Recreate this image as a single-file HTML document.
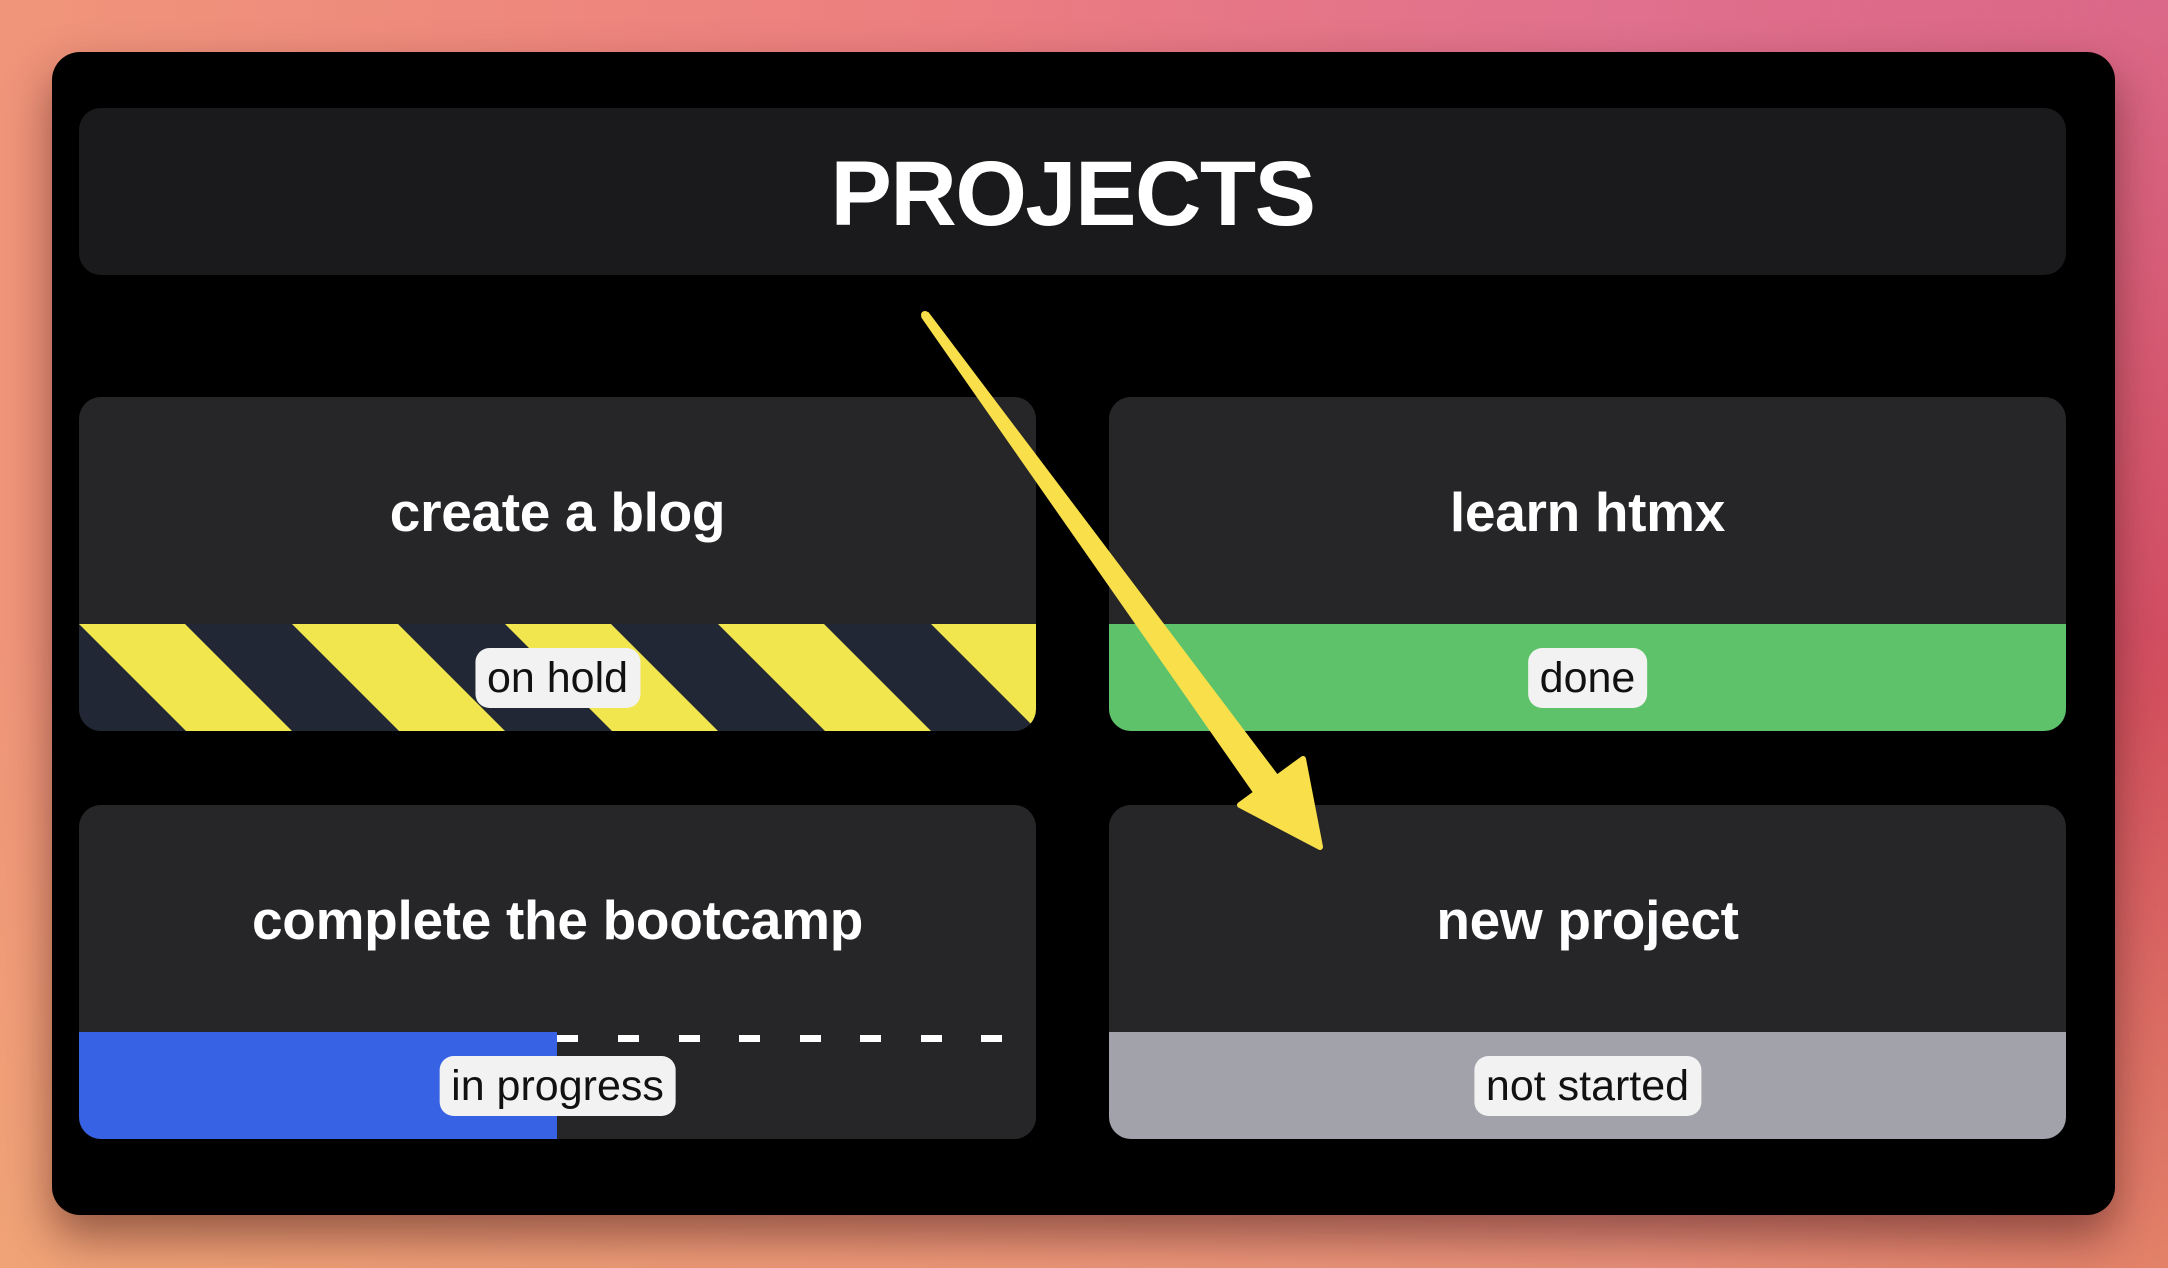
<!DOCTYPE html>
<html><head><meta charset="utf-8"><style>
*{margin:0;padding:0;box-sizing:border-box}
html,body{width:2168px;height:1268px;overflow:hidden}
body{position:relative;font-family:"Liberation Sans",sans-serif;
background:linear-gradient(90deg,#f0957a 0%,#ec7d80 45%,#e06a82 75%,#d24a5c 100%);}
.bg2{position:absolute;inset:0;background:linear-gradient(180deg,rgba(240,170,120,0) 0%,rgba(240,170,120,0) 50%,rgba(240,175,115,0.55) 100%);}
.bg3{position:absolute;inset:0;background:radial-gradient(ellipse at 100% 0%,rgba(225,125,165,0.6),rgba(225,125,165,0) 40%);}
.win{position:absolute;left:52px;top:52px;width:2063px;height:1163px;background:#000;border-radius:28px;box-shadow:0 22px 44px rgba(60,20,20,0.5)}
.hdr{position:absolute;left:79px;top:108px;width:1987px;height:167px;background:#1a1a1c;border-radius:22px;color:#fff;font-weight:bold;font-size:92px;letter-spacing:-1.5px;text-align:center;line-height:172px}
.card{position:absolute;width:957px;height:334px;background:#262628;border-radius:22px;overflow:hidden}
.title{position:absolute;left:0;right:0;top:0;height:227px;line-height:230px;text-align:center;color:#fff;font-weight:bold;font-size:55px;letter-spacing:-0.3px}
.bar{position:absolute;left:0;right:0;top:227px;height:107px}
.badge{position:absolute;left:50%;top:50%;transform:translate(-50%,-50%);background:#f2f2f2;color:#111;font-size:43px;border-radius:14px;padding:0 12px;height:60px;line-height:60px;white-space:nowrap}
</style></head><body>
<div class="bg2"></div><div class="bg3"></div>
<div class="win"></div>
<div class="hdr">PROJECTS</div>

<div class="card" style="left:79px;top:397px">
  <div class="title">create a blog</div>
  <div class="bar" style="background:#212734">
    <svg width="957" height="107" style="position:absolute;left:0;top:0">
      <g fill="#f2e64e">
        <polygon points="-213,0 -107,0 0,107 -106,107"/>
        <polygon points="0,0 106,0 213,107 107,107"/>
        <polygon points="213,0 319,0 426,107 320,107"/>
        <polygon points="426,0 532,0 639,107 533,107"/>
        <polygon points="639,0 745,0 852,107 746,107"/>
        <polygon points="852,0 958,0 1065,107 959,107"/>
      </g>
    </svg>
    <div class="badge">on hold</div>
  </div>
</div>

<div class="card" style="left:1109px;top:397px">
  <div class="title">learn htmx</div>
  <div class="bar" style="background:#5ec26a"><div class="badge">done</div></div>
</div>

<div class="card" style="left:79px;top:805px">
  <div class="title">complete the bootcamp</div>
  <div class="bar" style="background:#262628">
    <div style="position:absolute;left:0;top:0;width:478px;height:107px;background:#3662e3"></div>
    <svg width="957" height="10" style="position:absolute;left:0;top:0">
      <g fill="#fff">
        <rect x="478" y="3" width="21" height="7"/><rect x="539" y="3" width="21" height="7"/>
        <rect x="600" y="3" width="21" height="7"/><rect x="660" y="3" width="21" height="7"/>
        <rect x="721" y="3" width="21" height="7"/><rect x="781" y="3" width="21" height="7"/>
        <rect x="842" y="3" width="21" height="7"/><rect x="902" y="3" width="21" height="7"/>
      </g>
    </svg>
    <div class="badge">in progress</div>
  </div>
</div>

<div class="card" style="left:1109px;top:805px">
  <div class="title">new project</div>
  <div class="bar" style="background:#a1a2aa"><div class="badge">not started</div></div>
</div>

<svg width="2168" height="1268" style="position:absolute;left:0;top:0">
  <g fill="#f9e04b" stroke="#f9e04b" stroke-linejoin="round">
    <circle cx="925" cy="315" r="4" stroke="none"/>
    <polygon points="921.8,317.4 928.2,312.6 1282,781 1258,799" stroke-width="1"/>
    <polygon points="1240,805 1303,759 1320,847" stroke-width="6"/>
  </g>
</svg>
</body></html>
